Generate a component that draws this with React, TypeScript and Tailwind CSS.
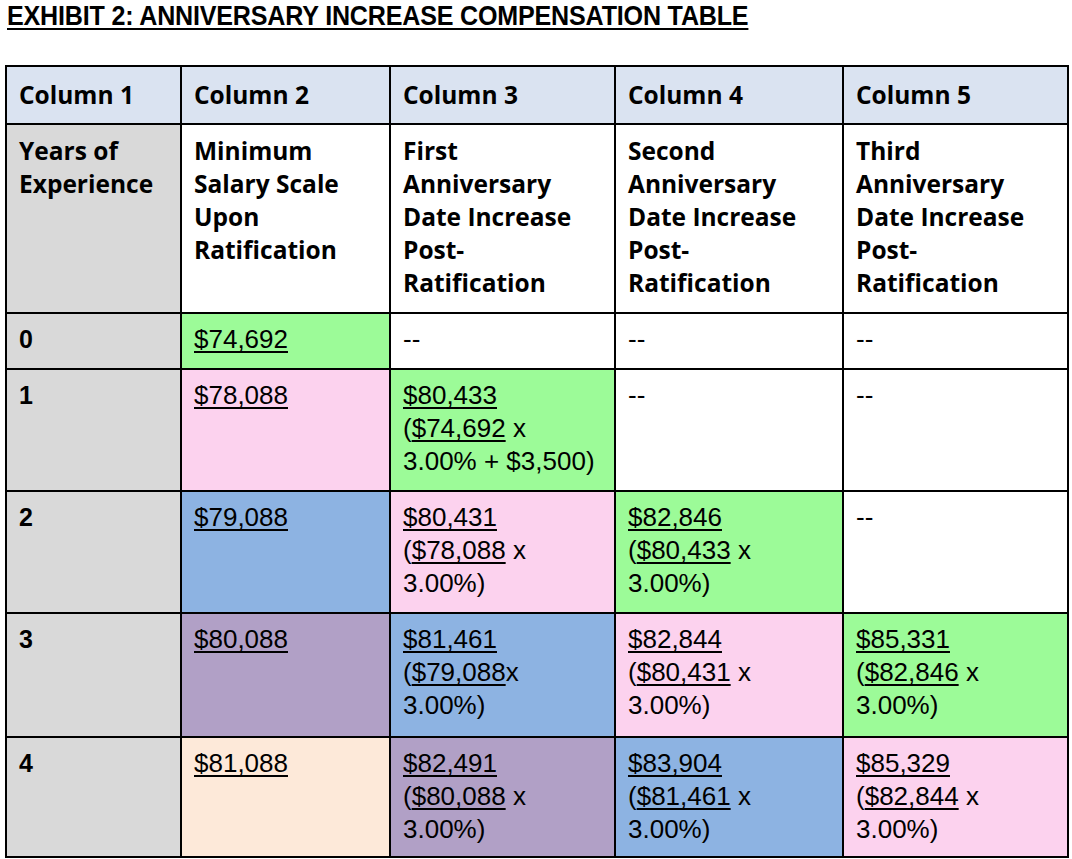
import React from "react";

const HF = { fontFamily: '"Open Sans", "Liberation Sans", sans-serif' };

type Part = { t: string; u?: boolean };
type Cell = { bg: string; lines?: Part[][]; dash?: boolean };

const U = (t: string): Part => ({ t, u: true });
const P = (t: string): Part => ({ t });

const val = (a: string, b?: string, c?: string, tail = "3.00%)"): Part[][] =>
  b
    ? [[U(a)], [P("("), U(b), P(c ?? " x")], [P(tail)]]
    : [[U(a)]];

const rows: { y: string; h: string; cells: Cell[] }[] = [
  {
    y: "0",
    h: "h-[56px]",
    cells: [
      { bg: "bg-[#9cfb98]", lines: val("$74,692") },
      { bg: "bg-white", dash: true },
      { bg: "bg-white", dash: true },
      { bg: "bg-white", dash: true },
    ],
  },
  {
    y: "1",
    h: "h-[122px]",
    cells: [
      { bg: "bg-[#fcd2ee]", lines: val("$78,088") },
      { bg: "bg-[#9cfb98]", lines: val("$80,433", "$74,692", " x", "3.00% + $3,500)") },
      { bg: "bg-white", dash: true },
      { bg: "bg-white", dash: true },
    ],
  },
  {
    y: "2",
    h: "h-[122px]",
    cells: [
      { bg: "bg-[#8db3e2]", lines: val("$79,088") },
      { bg: "bg-[#fcd2ee]", lines: val("$80,431", "$78,088") },
      { bg: "bg-[#9cfb98]", lines: val("$82,846", "$80,433") },
      { bg: "bg-white", dash: true },
    ],
  },
  {
    y: "3",
    h: "h-[124px]",
    cells: [
      { bg: "bg-[#b1a0c6]", lines: val("$80,088") },
      { bg: "bg-[#8db3e2]", lines: val("$81,461", "$79,088", "x") },
      { bg: "bg-[#fcd2ee]", lines: val("$82,844", "$80,431") },
      { bg: "bg-[#9cfb98]", lines: val("$85,331", "$82,846") },
    ],
  },
  {
    y: "4",
    h: "h-[120px]",
    cells: [
      { bg: "bg-[#fde9d9]", lines: val("$81,088") },
      { bg: "bg-[#b1a0c6]", lines: val("$82,491", "$80,088") },
      { bg: "bg-[#8db3e2]", lines: val("$83,904", "$81,461") },
      { bg: "bg-[#fcd2ee]", lines: val("$85,329", "$82,844") },
    ],
  },
];

const heads = [
  ["Years of", "Experience"],
  ["Minimum", "Salary Scale", "Upon", "Ratification"],
  ["First", "Anniversary", "Date Increase", "Post-", "Ratification"],
  ["Second", "Anniversary", "Date Increase", "Post-", "Ratification"],
  ["Third", "Anniversary", "Date Increase", "Post-", "Ratification"],
];

const td = "border-2 border-black align-top pl-[12px] pr-[4px] pt-[9px]";

export default function App() {
  return (
    <div className="w-[1072px] h-[859px] overflow-hidden bg-white text-black">
      <div className="pl-[7px] pt-[1px] h-[65px]">
        <h1
          className="inline-block origin-left scale-x-[0.929] font-bold underline underline-offset-[3px] decoration-2 text-[27px] leading-[30px] tracking-[-0.2px] whitespace-nowrap"
          style={{ fontFamily: '"Liberation Sans", Arial, sans-serif' }}
        >
          EXHIBIT 2: ANNIVERSARY INCREASE COMPENSATION TABLE
        </h1>
      </div>
      <table
        className="ml-[5px] table-fixed border-collapse border-2 border-black w-[1062px] text-[26px] leading-[33px]"
        style={{ fontFamily: '"Liberation Sans", Arial, sans-serif' }}
      >
        <colgroup>
          <col className="w-[175px]" />
          <col className="w-[209px]" />
          <col className="w-[225px]" />
          <col className="w-[228px]" />
          <col className="w-[225px]" />
        </colgroup>
        <tbody>
          <tr className="h-[58px] bg-[#dae3f1]">
            {[1, 2, 3, 4, 5].map((n) => (
              <td key={n} className={`${td} font-bold text-[24.5px] !pt-[11px]`} style={HF}>
                Column {n}
              </td>
            ))}
          </tr>
          <tr className="h-[189px]">
            {heads.map((h, i) => (
              <td
                key={i}
                className={`${td} font-bold text-[24.5px] ${i === 0 ? "bg-[#d9d9d9]" : "bg-white"}`}
                style={HF}
              >
                {h.map((l, j) => (
                  <div key={j} className="whitespace-nowrap">{l}</div>
                ))}
              </td>
            ))}
          </tr>
          {rows.map((r) => (
            <tr key={r.y} className={r.h}>
              <td className={`${td} bg-[#d9d9d9] font-bold text-[25px]`}>{r.y}</td>
              {r.cells.map((c, i) => (
                <td key={i} className={`${td} ${c.bg}`}>
                  {c.dash ? (
                    <div>--</div>
                  ) : (
                    c.lines!.map((ln, j) => (
                      <div key={j} className="whitespace-nowrap">
                        {ln.map((p, k) =>
                          p.u ? (
                            <span key={k} className="underline underline-offset-[3px] decoration-[1.5px]">
                              {p.t}
                            </span>
                          ) : (
                            <span key={k}>{p.t}</span>
                          )
                        )}
                      </div>
                    ))
                  )}
                </td>
              ))}
            </tr>
          ))}
        </tbody>
      </table>
    </div>
  );
}
